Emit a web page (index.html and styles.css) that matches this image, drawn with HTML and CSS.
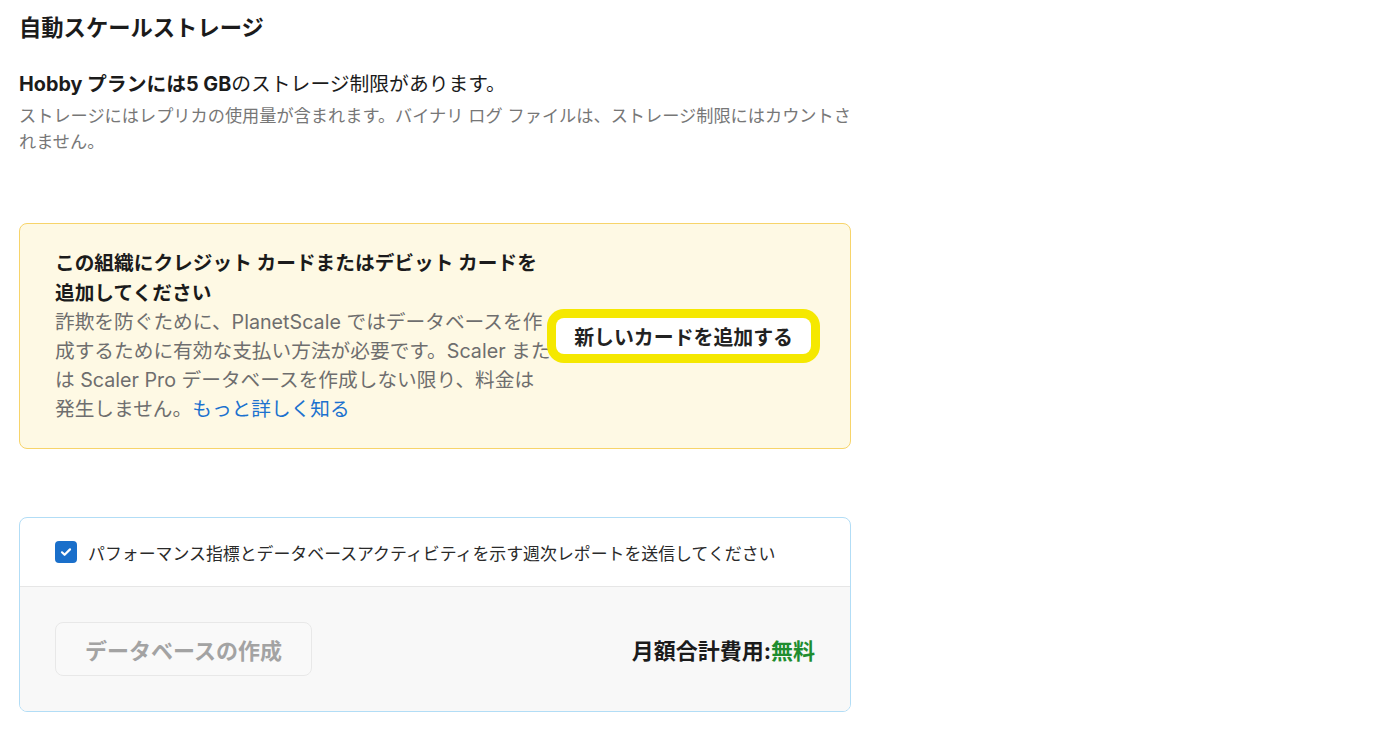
FILE: index.html
```html
<!DOCTYPE html>
<html lang="ja">
<head>
    <meta charset="UTF-8">
    <meta name="viewport" content="width=device-width, initial-scale=1.0">
    <title>自動スケールストレージ</title>
    <link rel="stylesheet" href="styles.css">
</head>
<body>
    <div class="page">
        <h1 class="title">自動スケールストレージ</h1>
        <p class="limit"><b>Hobby プランには5 GB</b>のストレージ制限があります。</p>
        <p class="note">ストレージにはレプリカの使用量が含まれます。バイナリ ログ ファイルは、ストレージ制限にはカウントされません。</p>

        <div class="notice">
            <div class="notice-text">
                <div class="notice-title">この組織にクレジット カードまたはデビット カードを追加してください</div>
                <p class="notice-body">詐欺を防ぐために、PlanetScale ではデータベースを作成するために有効な支払い方法が必要です。Scaler または Scaler Pro データベースを作成しない限り、料金は発生しません。<a href="#">もっと詳しく知る</a></p>
            </div>
            <button class="card-btn">新しいカードを追加する</button>
        </div>

        <div class="create">
            <label class="report">
                <span class="checkbox">
                    <svg width="14" height="14" viewBox="0 0 14 14"><path d="M3 7.3l2.6 2.5L11 4.4" fill="none" stroke="#fff" stroke-width="2.2" stroke-linecap="round" stroke-linejoin="round"/></svg>
                </span>
                パフォーマンス指標とデータベースアクティビティを示す週次レポートを送信してください
            </label>
            <div class="create-foot">
                <button class="create-btn" disabled>データベースの作成</button>
                <div class="cost">月額合計費用:<span class="free">無料</span></div>
            </div>
        </div>
    </div>
</body>
</html>
```

FILE: styles.css
```css
body {
    margin: 0;
    background: #fff;
    color: #1b1b1b;
    font-family: Inter, "Noto Sans CJK JP", sans-serif;
}
.page {
    width: 832px;
    padding: 13px 19px 40px;
}
.title {
    margin: 0;
    font-size: 22.3px;
    line-height: 30px;
    font-weight: 700;
}
.limit {
    margin: 27px 0 0;
    font-size: 19.8px;
    line-height: 28px;
}
.note {
    margin: 5px 0 0;
    font-size: 17.2px;
    line-height: 26px;
    color: #777;
}
.notice {
    margin-top: 68px;
    display: flex;
    align-items: center;
    justify-content: space-between;
    padding: 24px 39px 24px 35px;
    background: #fef9e4;
    border: 1px solid #f7d46a;
    border-radius: 8px;
}
.notice-text {
    width: 497px;
}
.notice-title {
    font-size: 19.7px;
    line-height: 30px;
    font-weight: 700;
}
.notice-body {
    margin: 0;
    font-size: 19.7px;
    line-height: 29px;
    color: #6e6e6e;
}
.notice-body a {
    color: #1c72cf;
    text-decoration: none;
}
.card-btn {
    padding: 0 18px;
    height: 36px;
    font-family: inherit;
    font-size: 19.9px;
    font-weight: 700;
    color: #222;
    background: #fff;
    border: none;
    border-radius: 8px;
    box-shadow: 0 0 0 9px #f5e800;
}
.create {
    margin-top: 68px;
    border: 1px solid #b2ddf6;
    border-radius: 8px;
    overflow: hidden;
}
.report {
    display: flex;
    align-items: center;
    gap: 11px;
    height: 68px;
    padding: 0 35px;
    font-size: 16.9px;
    color: #2a2a2a;
    border-bottom: 1px solid #e6e6e6;
}
.checkbox {
    width: 22px;
    height: 22px;
    border-radius: 4px;
    background: #1a6fca;
    display: flex;
    align-items: center;
    justify-content: center;
}
.create-foot {
    display: flex;
    align-items: center;
    justify-content: space-between;
    height: 124px;
    padding: 0 35px;
    background: #f8f8f8;
}
.create-btn {
    height: 54px;
    padding: 0 29px;
    font-family: inherit;
    font-size: 22px;
    font-weight: 700;
    color: #a3a3a3;
    background: #f9f9f9;
    border: 1px solid #e8e8e8;
    border-radius: 8px;
}
.cost {
    font-size: 22px;
    font-weight: 700;
    color: #1b1b1b;
}
.free {
    color: #1f8d2f;
}
```
